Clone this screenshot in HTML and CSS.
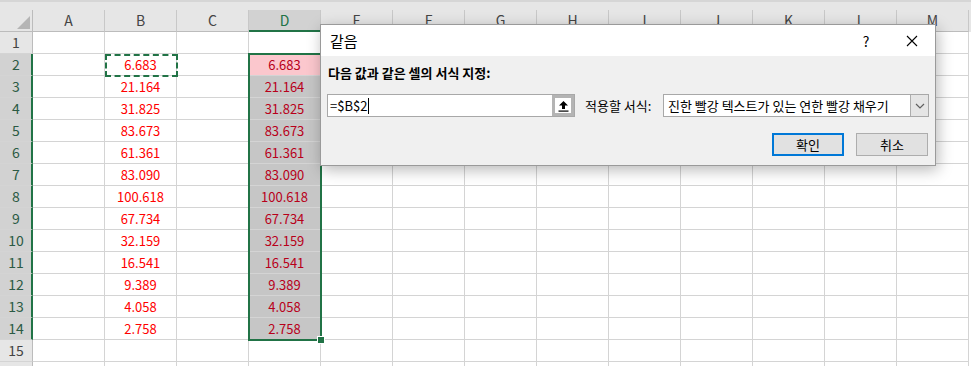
FILE: index.html
```html
<!DOCTYPE html>
<html>
  <head>
    <meta charset="utf-8">
    <title>같음 - 조건부 서식</title>
    <link rel="stylesheet" href="styles.css">
  </head>

  <body>
    <div class="sheet">
      <div class="topstrip"></div>
      <div id="grid"></div>

      <!-- 선택 영역 D2:D14 -->
      <div class="selbox"><div class="handle"></div></div>
      <!-- 복사 영역 B2 -->
      <div class="ants"></div>

      <!-- 같음 대화상자 -->
      <div class="dialog">
        <div class="dlg-title">
          <span class="dlg-name">같음</span>
          <div class="dlg-ctrls">
            <span class="cap-btn">?</span>
            <span class="cap-btn">
              <svg width="12" height="12" viewBox="0 0 12 12">
                <path d="M1 1 L11 11 M11 1 L1 11" stroke="#000" stroke-width="1.1" fill="none"/>
              </svg>
            </span>
          </div>
        </div>
        <div class="dlg-body">
          <div class="dlg-label">다음 값과 같은 셀의 서식 지정:</div>
          <div class="dlg-row">
            <div class="ref-input">
              <span class="ref-text">=$B$2</span><span class="caret"></span>
              <div class="ref-btn">
                <svg width="11" height="12" viewBox="0 0 11 12">
                  <path d="M5.5 1 L10 5.5 L7 5.5 L7 9 L4 9 L4 5.5 L1 5.5 Z" fill="#000"/>
                  <rect x="0.5" y="10.5" width="10" height="1.2" fill="#000"/>
                </svg>
              </div>
            </div>
            <span class="fmt-label">적용할 서식:</span>
            <div class="combo">
              <span class="combo-text">진한 빨강 텍스트가 있는 연한 빨강 채우기</span>
              <div class="combo-btn">
                <svg width="10" height="6" viewBox="0 0 10 6">
                  <path d="M1 1 L5 5 L9 1" stroke="#606060" stroke-width="1.2" fill="none"/>
                </svg>
              </div>
            </div>
          </div>
          <div class="dlg-buttons">
            <button class="btn btn-default">확인</button>
            <button class="btn">취소</button>
          </div>
        </div>
      </div>
    </div>

    <script src="script.js"></script>
  </body>
</html>
```

FILE: styles.css
```css
body {
  margin: 0;
  font-family: "Noto Sans CJK KR", "Noto Sans", sans-serif;
}

.sheet {
  position: relative;
  width: 971px;
  height: 366px;
  overflow: hidden;
  background-color: #fff;
}

.topstrip {
  height: 10px;
  background-color: #e6e6e6;
  border-top: 2px solid #d6d6d6;
  box-sizing: border-box;
}

/* grid rows */
.row {
  display: flex;
  height: 22px;
}

.row.head {
  background-color: #e6e6e6;
}

.corner {
  width: 33px;
  flex: none;
  box-sizing: border-box;
  border-right: 1px solid #bcbcbc;
  border-bottom: 1px solid #bcbcbc;
  display: flex;
  align-items: flex-end;
  justify-content: flex-end;
  padding: 0 2px 2px 0;
}

.ch {
  width: 72px;
  flex: none;
  box-sizing: border-box;
  border-right: 1px solid #c8c8c8;
  border-bottom: 1px solid #bcbcbc;
  color: #444;
  font-size: 14px;
  line-height: 21px;
  text-align: center;
}

.ch.on {
  background-color: #d2d2d2;
  color: #217346;
  border-bottom: 2px solid #217346;
}

.rh {
  width: 33px;
  flex: none;
  box-sizing: border-box;
  background-color: #e6e6e6;
  border-right: 1px solid #bcbcbc;
  border-bottom: 1px solid #d4d4d4;
  color: #444;
  font-size: 14px;
  line-height: 21px;
  text-align: center;
}

.rh.on {
  background-color: #d2d2d2;
  color: #2b5a44;
  border-right: 2px solid #217346;
  padding-left: 1px;
}

.cell {
  width: 72px;
  flex: none;
  box-sizing: border-box;
  border-right: 1px solid #d4d4d4;
  border-bottom: 1px solid #d4d4d4;
  font-size: 13px;
  line-height: 21px;
  text-align: center;
}

.cell.red {
  color: #ff0000;
}

.cell.sel {
  background-color: #c6c6c6;
  color: #b8001a;
}

.cell.hit {
  background-color: #fbc7cd;
  box-shadow: inset 1px 1px 0 #fff;
}

/* selection overlays */
.selbox {
  position: absolute;
  left: 248px;
  top: 53px;
  width: 74px;
  height: 288px;
  border: 2px solid #217346;
  box-sizing: border-box;
}

.handle {
  position: absolute;
  right: -5px;
  bottom: -5px;
  width: 6px;
  height: 6px;
  background-color: #217346;
  border: 1px solid #fff;
}

.ants {
  position: absolute;
  left: 105px;
  top: 54px;
  width: 73px;
  height: 23px;
  border: 2px dashed #217346;
  box-sizing: border-box;
}

/* dialog */
.dialog {
  position: absolute;
  left: 320px;
  top: 24px;
  width: 614px;
  border: 1px solid #9a9a9a;
  background-color: #f0f0f0;
  box-shadow: 2px 4px 14px rgba(0, 0, 0, 0.28);
}

.dlg-title {
  display: flex;
  justify-content: space-between;
  align-items: center;
  height: 31px;
  background-color: #fff;
}

.dlg-name {
  padding-left: 9px;
  font-size: 15px;
  line-height: 20px;
  color: #000;
}

.dlg-ctrls {
  display: flex;
  height: 31px;
}

.cap-btn {
  width: 46px;
  display: flex;
  align-items: center;
  justify-content: center;
  font-size: 14px;
  color: #000;
}

.dlg-body {
  padding: 8px 6px 9px 6px;
  font-size: 13px;
  color: #000;
}

.dlg-label {
  font-weight: bold;
  line-height: 17px;
  padding-left: 1px;
}

.dlg-row {
  display: flex;
  align-items: center;
  margin-top: 13px;
  height: 23px;
}

.ref-input {
  width: 248px;
  height: 23px;
  box-sizing: border-box;
  border: 1px solid #a8a8a8;
  background-color: #fff;
  display: flex;
  align-items: center;
}

.ref-text {
  padding-left: 2px;
  font-size: 13px;
  line-height: 17px;
}

.caret {
  width: 1px;
  height: 16px;
  background-color: #000;
  margin-left: 1px;
}

.ref-btn {
  margin-left: auto;
  width: 22px;
  height: 21px;
  box-sizing: border-box;
  border: 3px solid #b4b4b4;
  background-color: #fff;
  display: flex;
  align-items: center;
  justify-content: center;
}

.fmt-label {
  flex: 1;
  margin-left: 10px;
  line-height: 17px;
}

.combo {
  width: 266px;
  height: 23px;
  box-sizing: border-box;
  border: 1px solid #a8a8a8;
  background-color: #fff;
  display: flex;
  align-items: center;
}

.combo-text {
  padding-left: 4px;
  line-height: 17px;
  white-space: nowrap;
}

.combo-btn {
  margin-left: auto;
  width: 18px;
  height: 21px;
  box-sizing: border-box;
  border-left: 1px solid #adadad;
  background-color: #e5e5e5;
  display: flex;
  align-items: center;
  justify-content: center;
}

.dlg-buttons {
  display: flex;
  justify-content: flex-end;
  gap: 12px;
  margin-top: 16px;
  padding-right: 1px;
}

.btn {
  width: 72px;
  height: 23px;
  box-sizing: border-box;
  border: 1px solid #adadad;
  background-color: #e1e1e1;
  font-family: "Noto Sans CJK KR", "Noto Sans", sans-serif;
  font-size: 13px;
  line-height: 17px;
  color: #000;
  padding: 0;
}

.btn-default {
  border: 2px solid #0078d7;
}
```

FILE: script.js
```js
// 시트 그리드 만들기
const grid = document.getElementById("grid");
const cols = ["A", "B", "C", "D", "E", "F", "G", "H", "I", "J", "K", "L", "M"];
const values = ["6.683", "21.164", "31.825", "83.673", "61.361", "83.090", "100.618",
  "67.734", "32.159", "16.541", "9.389", "4.058", "2.758"];

// 열 머리글
let head = document.createElement("div");
head.className = "row head";
head.innerHTML = '<div class="corner"><svg width="13" height="13" viewBox="0 0 13 13">' +
  '<polygon points="13,0 13,13 0,13" fill="#b5b5b5"/></svg></div>';
cols.forEach(function (c) {
  let ch = document.createElement("div");
  ch.className = c == "D" ? "ch on" : "ch";
  ch.textContent = c;
  head.appendChild(ch);
});
grid.appendChild(head);

// 행 (16행은 화면 밖이라 번호 없이 일부만 보임)
for (let r = 1; r <= 16; r++) {
  let row = document.createElement("div");
  row.className = "row";
  let inSel = r >= 2 && r <= 14;

  let rh = document.createElement("div");
  rh.className = inSel ? "rh on" : "rh";
  if (r < 16) rh.textContent = r;
  row.appendChild(rh);

  cols.forEach(function (c) {
    let cell = document.createElement("div");
    cell.className = "cell";
    if (inSel && c == "B") {
      cell.className += " red";
      cell.textContent = values[r - 2];
    }
    if (inSel && c == "D") {
      cell.className += r == 2 ? " sel hit" : " sel";
      cell.textContent = values[r - 2];
    }
    row.appendChild(cell);
  });
  grid.appendChild(row);
}
```
